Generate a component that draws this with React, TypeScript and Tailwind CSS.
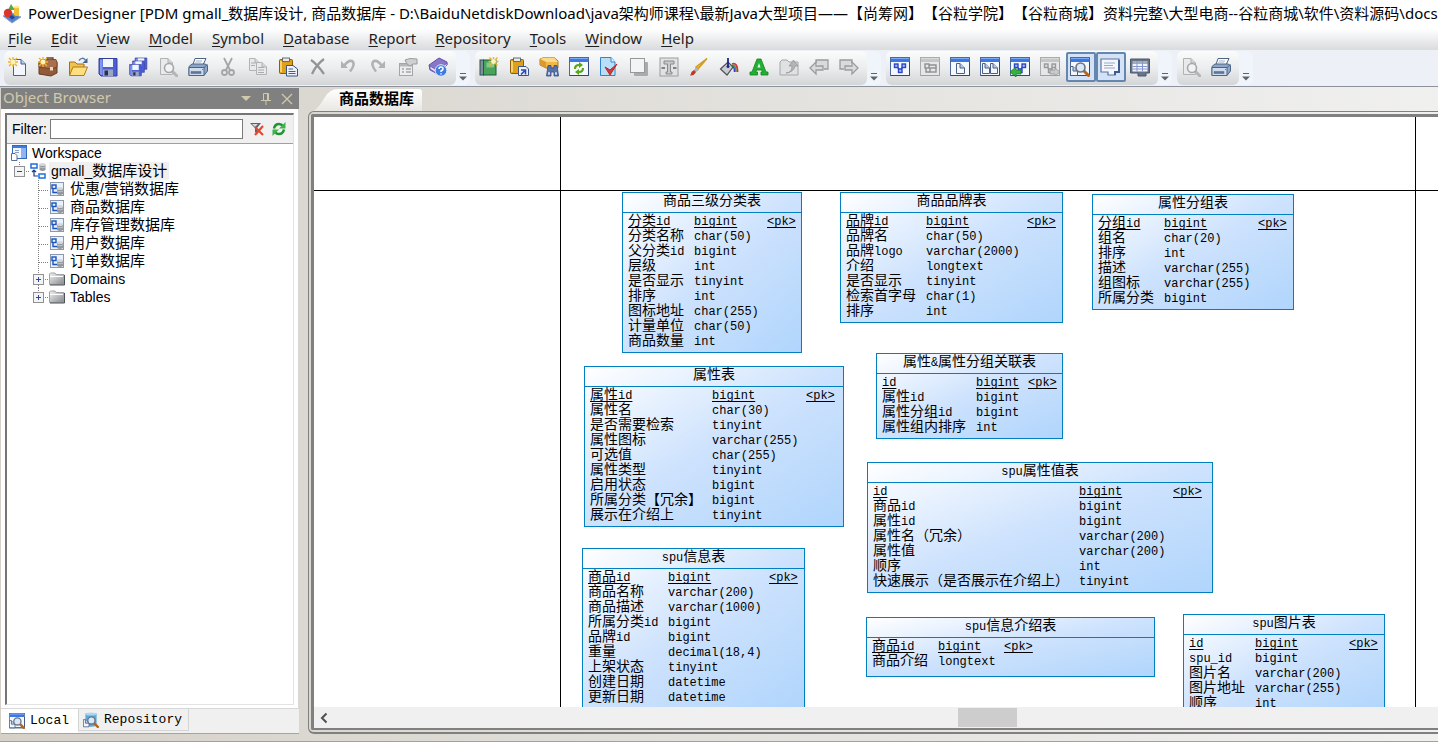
import React, { useState } from 'react';

interface Column {
  name: string;
  type: string;
}

interface Entity {
  title: string;
  x: number;
  y: number;
  width: number;
  minHeight?: number;
  nameWidth: number;
  typeWidth: number;
  columns: Column[];
}

const cols = (text: string): Column[] =>
  text.split(';').map(item => {
    const [name, type] = item.split(':');
    return { name, type };
  });

// positions are relative to the diagram canvas
const entities: Entity[] = [
  {
    title: '商品三级分类表', x: 308, y: 75, width: 180, nameWidth: 66, typeWidth: 73,
    columns: cols('分类id:bigint;分类名称:char(50);父分类id:bigint;层级:int;是否显示:tinyint;排序:int;图标地址:char(255);计量单位:char(50);商品数量:int')
  },
  {
    title: '商品品牌表', x: 526, y: 75, width: 223, nameWidth: 80, typeWidth: 101,
    columns: cols('品牌id:bigint;品牌名:char(50);品牌logo:varchar(2000);介绍:longtext;是否显示:tinyint;检索首字母:char(1);排序:int')
  },
  {
    title: '属性分组表', x: 778, y: 77, width: 202, nameWidth: 66, typeWidth: 94,
    columns: cols('分组id:bigint;组名:char(20);排序:int;描述:varchar(255);组图标:varchar(255);所属分类:bigint')
  },
  {
    title: '属性&属性分组关联表', x: 562, y: 236, width: 187, nameWidth: 94, typeWidth: 52,
    columns: cols('id:bigint;属性id:bigint;属性分组id:bigint;属性组内排序:int')
  },
  {
    title: '属性表', x: 270, y: 249, width: 260, nameWidth: 122, typeWidth: 94,
    columns: cols('属性id:bigint;属性名:char(30);是否需要检索:tinyint;属性图标:varchar(255);可选值:char(255);属性类型:tinyint;启用状态:bigint;所属分类【冗余】:bigint;展示在介绍上:tinyint')
  },
  {
    title: 'spu信息表', x: 268, y: 431, width: 223, nameWidth: 80, typeWidth: 101,
    columns: cols('商品id:bigint;商品名称:varchar(200);商品描述:varchar(1000);所属分类id:bigint;品牌id:bigint;重量:decimal(18,4);上架状态:tinyint;创建日期:datetime;更新日期:datetime')
  },
  {
    title: 'spu属性值表', x: 553, y: 345, width: 346, nameWidth: 206, typeWidth: 94,
    columns: cols('id:bigint;商品id:bigint;属性id:bigint;属性名（冗余）:varchar(200);属性值:varchar(200);顺序:int;快速展示（是否展示在介绍上）:tinyint')
  },
  {
    title: 'spu信息介绍表', x: 552, y: 500, width: 289, minHeight: 60, nameWidth: 66, typeWidth: 66,
    columns: cols('商品id:bigint;商品介绍:longtext')
  },
  {
    title: 'spu图片表', x: 869, y: 497, width: 202, nameWidth: 66, typeWidth: 94,
    columns: cols('id:bigint;spu_id:bigint;图片名:varchar(200);图片地址:varchar(255);顺序:int')
  }
];

const CJK = /([\u3000-\u9fff\uff00-\uffef]+)/;

// Chinese runs are set larger than the Latin text around them
const Mixed: React.FC<{ text: string; cjk: string }> = ({ text, cjk }) => (
  <>
    {text.split(CJK).map((part, i) => (i % 2 ? <span key={i} className={cjk}>{part}</span> : part))}
  </>
);

/* ---------- icon parts ---------- */

const Spark = ({ x = 5, y = 5 }) => (
  <g transform={`translate(${x} ${y})`}>
    <path d="M0-5V5M-5 0H5M-4-4L4 4M4-4L-4 4" stroke="#eeb22d" strokeWidth="1.4" />
    <circle r="2.4" fill="#fff3b0" />
  </g>
);

const Page = ({ x = 5, y = 2, w = 13, h = 17, gray = false }) => (
  <g transform={`translate(${x} ${y})`}>
    <path d={`M.5 .5H${w - 5}L${w - 0.5} 5V${h - 0.5}H.5Z`} fill={gray ? '#e9eaeb' : '#f3f7fd'} stroke={gray ? '#b0b2b4' : '#4a6184'} />
    <path d={`M${w - 5} .5V5H${w - 0.5}`} fill={gray ? '#d4d5d6' : '#b9cbe6'} stroke={gray ? '#b0b2b4' : '#4a6184'} />
  </g>
);

const Frame = ({ gray = false }) => (
  <g>
    <rect x=".5" y=".5" width="19" height="18" fill={gray ? '#e6e7e8' : '#f4f8ff'} stroke={gray ? '#a9abad' : '#4e689c'} />
    <rect x="1" y="1" width="18" height="4" fill={gray ? '#c4c6c8' : '#3f77e0'} />
    <rect x="1" y="1" width="18" height="1" fill={gray ? '#d8dadb' : '#7eabf5'} />
    <path d="M19.500 5V18.500H1" stroke={gray ? '#9d9fa1' : '#34496f'} />
  </g>
);

const Lens = ({ x = 9, y = 10, gray = false }) => (
  <g>
    <path d={`M${x + 3} ${y + 3}L${x + 8} ${y + 8}`} stroke={gray ? '#b3b5b7' : '#b5651d'} strokeWidth="3" strokeLinecap="round" />
    <circle cx={x} cy={y} r="4.5" fill={gray ? '#f2f3f3' : '#d8e9fa'} stroke={gray ? '#a5a7a9' : '#6a7280'} strokeWidth="1.6" />
  </g>
);

const Nodes = ({ gray = false }) => (
  <g fill={gray ? '#dcdddd' : '#a9b8fb'} stroke={gray ? '#98999b' : '#2c46c8'} strokeWidth="1.4">
    <path d="M7 10L10 13L14 9" fill="none" />
    <rect x="4.500" y="7" width="3.500" height="3.500" />
    <rect x="12" y="7" width="3.500" height="3.500" />
    <rect x="8.500" y="12" width="3.500" height="3.500" />
  </g>
);

const Cylinder = ({ x = 9, y = 7 }) => (
  <g transform={`translate(${x} ${y})`}>
    <path d="M0 1.500V7Q3 9 6 7V1.500Z" fill="#92979c" />
    <ellipse cx="3" cy="1.500" rx="3" ry="1.500" fill="#d4d7da" />
    <path d="M0 4Q3 5.500 6 4" fill="none" stroke="#d4d7da" strokeWidth=".7" />
  </g>
);

const Printer = () => (
  <g stroke="#4c6486" strokeLinejoin="round">
    <path d="M7 1.500L18 1.500L14.500 9H4.500Z" fill="#fbfcfe" />
    <path d="M1 9.500L4 7H17L19.500 8.500V14L16 18.500H1Z" fill="#8ea6c8" />
    <path d="M1 10.500H16V18.500H1Z" fill="#cfdcee" />
    <path d="M16 10.500L19.500 7.500" fill="none" />
    <path d="M3 14.500H13V16.500H3Z" fill="#5e7699" strokeWidth=".5" />
    <path d="M8 4H14M7 6H13" stroke="#a5b2c5" />
    <path d="M14 12.500H15" stroke="#3fae3f" />
  </g>
);

const Floppy = ({ s = 1, x = 0, y = 0 }) => (
  <g transform={`translate(${x} ${y}) scale(${s})`}>
    <path d="M1 1.500H19V19H3L1 17Z" fill="#4b5fd6" stroke="#343f9c" />
    <path d="M2 2.500H4.500V18H3L2 17Z" fill="#8496ee" />
    <rect x="5" y="2" width="10" height="8" fill="#f1f5fd" />
    <rect x="5" y="12.500" width="10" height="6.500" fill="#9ca6bd" />
    <rect x="6.500" y="13.500" width="3.500" height="5" fill="#26305c" />
  </g>
);

const Book = () => (
  <g>
    <path d="M1 8L11 1L19 5V8L10 17L2 13Z" fill="#8a76c8" stroke="#6350a4" />
    <path d="M2 12V9L10 14L19 6V8L10 17Z" fill="#e2def3" stroke="#6b57ad" strokeWidth=".8" />
    <circle cx="13" cy="13.500" r="5.800" fill="#3e7be0" stroke="#dce9fb" />
    <path d="M11 12Q11 10 13 10Q15.200 10 15 12Q14.700 13.200 13 14V15M13 16.200V17.500" fill="none" stroke="#fff" strokeWidth="1.500" />
  </g>
);

const Clipboard = ({ arrow = false }) => (
  <g>
    <rect x="1.500" y="2.500" width="13" height="14" rx="1" fill="#dfa11c" stroke="#8c5c10" />
    <path d="M3 4V15" stroke="#f9d976" strokeWidth="1.800" />
    <rect x="4.500" y="1" width="7" height="3.500" fill="#e9eaec" stroke="#5c6168" strokeWidth=".9" />
    <path d={arrow ? 'M9.500 9.500H17L19.500 12V18.500H9.500Z' : 'M8.500 8.500H15L19.500 12V19H8.500Z'} fill="#eef3fb" stroke="#3b5480" />
    {arrow ? <path d="M12 17.500L15.500 14M12 13H16.500V17.500" stroke="#2946b4" strokeWidth="1.600" /> : <path d="M10.500 12H15M10.500 14.500H17.500M10.500 16.500H17.500" stroke="#45608f" />}
  </g>
);

const Refresh = () => (
  <g fill="none" stroke="#1f9433" strokeWidth="2.500">
    <path d="M3 7.500Q4 3 8 3Q10.500 3 12 5" />
    <path d="M13 8.500Q12 13 8 13Q5.500 13 4 11" />
    <path d="M14.500 1V7.500H8Z" fill="#39b54a" stroke="none" />
    <path d="M1.500 15V8.500H8Z" fill="#39b54a" stroke="none" />
  </g>
);

const glyphs: Record<string, React.ReactNode> = {
  'New Model': <g><Page /><Spark /></g>,
  'New Project': (
    <g>
      <path d="M1 5H19V16L13 19L1 17Z" fill="#93593a" stroke="#6b3d22" />
      <path d="M1 5L4 2.500H18L19 5V10L13 12L1 10Z" fill="#a96f4c" stroke="#6b3d22" strokeWidth=".8" />
      <path d="M9 3V1H15V3" fill="none" stroke="#6b4025" strokeWidth="1.300" />
      <rect x="12" y="10" width="3" height="3.500" fill="#e8d7b8" />
      <Spark />
    </g>
  ),
  Open: (
    <g>
      <path d="M1.500 18V5H7L9 7H16V18Z" fill="#f0c24f" stroke="#a3701a" />
      <path d="M1.500 18.500L5 10H19.500L16 18.500Z" fill="#ffdf80" stroke="#b07b1c" />
      <path d="M11 3.500Q14 -.5 17.500 3" fill="none" stroke="#5878a8" strokeWidth="1.500" />
      <path d="M19.500 1V6H14.500Z" fill="#46648f" />
    </g>
  ),
  Save: <Floppy />,
  'Save All': <g><Floppy s={0.65} x={6.5} y={0} /><Floppy s={0.65} x={4} y={3} /><Floppy s={0.65} x={1} y={6.5} /></g>,
  'Print Preview': <g><Page x={2} y={1} gray /><Lens x={11} y={11} gray /></g>,
  Print: <Printer />,
  Cut: (
    <g fill="none" stroke="#a4a6a8" strokeWidth="1.800">
      <path d="M6 1L12 13M14 1L8 13" />
      <circle cx="6.500" cy="15.500" r="2.500" />
      <circle cx="13.500" cy="15.500" r="2.500" />
    </g>
  ),
  Copy: (
    <g>
      <Page x={1} y={1} w={11} h={13} gray />
      <Page x={8} y={5} w={11} h={13} gray />
      <path d="M3 6H7M3 8.500H7M10 10.500H16M10 13H16M10 15.500H16" stroke="#a9abad" />
    </g>
  ),
  Paste: <Clipboard />,
  Delete: <path d="M3 3Q9 7 16 17M16 2Q8 8 4 17" fill="none" stroke="#929496" strokeWidth="2.200" />,
  Undo: <g><path d="M6 9Q10 3 14 4Q18 7 12 14.500" fill="none" stroke="#b0b2b4" strokeWidth="2.600" /><path d="M3 4V11H10Z" fill="#b0b2b4" /></g>,
  Redo: <g><path d="M14 9Q10 3 6 4Q2 7 8 14.500" fill="none" stroke="#b0b2b4" strokeWidth="2.600" /><path d="M17 4V11H10Z" fill="#b0b2b4" /></g>,
  Properties: (
    <g>
      <rect x="1.500" y="6.500" width="13" height="12" fill="#eeeeef" stroke="#a3a5a7" />
      <rect x="2" y="7" width="12" height="2.500" fill="#b5b7b9" />
      <path d="M4 12H6M8 12H13M4 15H6M8 15H13" stroke="#a3a5a7" strokeWidth="1.300" />
      <path d="M7 3L12 1.500L19 2V7H15L12 9L9 7Z" fill="#cfd0d1" stroke="#999b9d" />
    </g>
  ),
  Help: <Book />,
  'New Diagram': (
    <g>
      <rect x="1" y="3" width="3.500" height="15" fill="#7c9296" stroke="#2e4e58" />
      <rect x="4.500" y="3" width="12.500" height="15" fill="#49a35a" stroke="#1f5c39" />
      <rect x="7.500" y="5.500" width="7" height="5" fill="#81c98b" />
      <Spark x={14.5} y={4.5} />
    </g>
  ),
  'Paste as Shortcut': <Clipboard arrow />,
  'Find Objects': (
    <g>
      <path d="M1 2L5 .5H15L19 4V11H7L1 8Z" fill="#f1b848" stroke="#a97a24" />
      <path d="M1 2L7 5H19L15 .5H5Z" fill="#fbd98a" />
      <path d="M1 2L7 5V11L1 8Z" fill="#dc9a2e" />
      <path d="M7.500 19L9 8.500H12V11H15V8.500H18L19.500 19H15V15H12V19Z" fill="#5873ab" stroke="#344b7d" strokeWidth=".8" />
      <path d="M9 16.500H11M16 16.500H18" stroke="#c9d8f2" strokeWidth="2.500" />
    </g>
  ),
  'Refresh View': (
    <g>
      <Frame />
      <path d="M6 12Q6 8 10 8M14 11Q14 15 10 15" fill="none" stroke="#5aa616" strokeWidth="2.200" />
      <path d="M10 5L14 8L10 11ZM10 12V18L6 15Z" fill="#5aa616" />
    </g>
  ),
  'Check Model': (
    <g>
      <path d="M1.500 .5H12L16 5V18.500H1.500Z" fill="#b9dff8" stroke="#2f86cc" />
      <path d="M12 .5V5H16" fill="#e9f5fd" stroke="#2f86cc" />
      <path d="M6 10L11 18L18 7L11 13Z" fill="#cf3a3d" stroke="#b8282c" />
    </g>
  ),
  Shadow: <g><rect x="5" y="5" width="14" height="14" rx="1" fill="#a9abad" /><rect x="1.500" y="1.500" width="14" height="14" fill="#f3f4f4" stroke="#96989a" /></g>,
  'Format Text': (
    <g>
      <rect x="1" y="1" width="18" height="18" fill="#e1e2e3" stroke="#9a9c9e" />
      <path d="M5 4H15V7H11.500V15H13V17H7V15H8.500V7H5Z" fill="#c9cacb" stroke="#808284" strokeWidth=".9" />
      <path d="M2.500 11H6M14 11H17.500" stroke="#808284" strokeWidth="2" />
    </g>
  ),
  'Line Style': (
    <g>
      <path d="M18 1.500L9 12L7 10Z" fill="#f2bb3a" stroke="#d19a25" strokeWidth="1.500" />
      <path d="M7 10L10 13L7 15L5 13Z" fill="#aeb4bb" />
      <path d="M5 13L7 15Q5 19 1 18.500Q2 17 2.500 15Z" fill="#c43524" />
    </g>
  ),
  'Fill Color': (
    <g>
      <path d="M13 7Q18.500 5 18.500 15" fill="none" stroke="#e03030" strokeWidth="1.800" />
      <path d="M12.500 8.500Q17 7 17 15" fill="none" stroke="#2ea144" strokeWidth="1.500" />
      <path d="M13 10Q15.500 9 15.500 15" fill="none" stroke="#2d3fe0" strokeWidth="1.500" />
      <path d="M1.500 12L9 5L14 10L8 18Z" fill="#c9ccd0" stroke="#4e5257" strokeWidth="1.200" />
      <path d="M9 1V9" stroke="#1c2a8a" strokeWidth="1.800" />
      <circle cx="9" cy="9.500" r="1.500" fill="#1c2a8a" />
    </g>
  ),
  'Font Color': (
    <g>
      <path d="M8 2H12L17 15H19V18H12V15H13.500L12.700 13H7.500L6.800 15H8.500V18H1V15H3Z" fill="#22b033" stroke="#13831f" strokeWidth=".8" />
      <path d="M8.500 10.500H11.500L10 6Z" fill="#eaf6eb" />
    </g>
  ),
  'Move Up': <g><path d="M1 18V5L3 3H8L10 5H19V18Z" fill="#e0e1e2" stroke="#a4a6a8" /><path d="M7 16Q13 16 13 9H10L14.500 3L19 9H16Q15 15 7 16Z" fill="#b2b4b6" stroke="#929496" strokeWidth=".7" /></g>,
  'Go Back': <g fill="#d9dadb" stroke="#9a9c9e" strokeWidth="1.300"><path d="M7 6V3H19V12H15" /><path d="M1 11L7 5V9H14V13H7V17Z" /></g>,
  'Go Forward': <g fill="#d9dadb" stroke="#9a9c9e" strokeWidth="1.300"><path d="M13 6V3H1V12H5" /><path d="M19 11L13 5V9H6V13H13V17Z" /></g>,
  'Physical Diagram': <g><Frame /><Nodes /></g>,
  'Hide Symbols': <g><Frame gray /><g fill="none" stroke="#8e9092" strokeWidth="1.400"><rect x="5" y="7" width="4" height="4" /><rect x="10" y="11" width="6" height="4" /><path d="M9 8H16V11M6 11V15H10" /></g></g>,
  'One Page': <g><Frame /><Page x={6} y={6} w={9} h={11} /></g>,
  'Two Pages': <g><Frame /><Page x={2} y={6} w={8} h={11} /><Page x={10} y={6} w={8} h={11} /></g>,
  'Previous Diagram': <g><Frame /><Nodes /><path d="M0 15L6 10V13H11V17H6V20Z" fill="#34b340" stroke="#147a22" strokeWidth=".8" /></g>,
  'Next Diagram': <g><Frame gray /><Nodes gray /><path d="M20 15L15 11V13H10V17H15V19Z" fill="#c9cacb" stroke="#949698" strokeWidth=".8" /></g>,
  Browser: <g><Frame /><Page x={0} y={9} w={8} h={10} /><Lens x={10.5} y={10.5} /></g>,
  Output: <g><path d="M1 2H19V15H15V18H8V15H1Z" fill="#f3f7fd" stroke="#5c7499" strokeWidth="1.200" /><path d="M4 6H15M4 8.500H13M4 11H15" stroke="#97a8c2" /><path d="M19 3V15H15V18" fill="none" stroke="#3e5c8e" strokeWidth="2" /></g>,
  'Result List': <g><path d="M.5 2H19.500V16H16V19H8V16H.5Z" fill="#66758a" stroke="#4a586c" /><rect x="2.500" y="4" width="15" height="3" fill="#a6adb7" /><path d="M2.500 7H17.500V14.500H2.500Z" fill="#f3f4fb" /><path d="M2.500 9.500H17.500M2.500 12H17.500M7 4V14.500M12.500 4V14.500" stroke="#8496d0" /></g>,
  Preview: <g><Page x={2} y={1} gray /><Lens x={11} y={11} gray /></g>,
  'Print Page': <Printer />
};

const Icon: React.FC<{ name: string }> = ({ name }) => (
  <svg width="20" height="20" viewBox="0 0 20 20" fill="none" aria-hidden="true">{glyphs[name]}</svg>
);

const toolbars: string[][] = [
  ['New Model', 'New Project', 'Open', 'Save', 'Save All', 'Print Preview', 'Print', 'Cut', 'Copy', 'Paste', 'Delete', 'Undo', 'Redo', 'Properties', 'Help'],
  ['New Diagram', 'Paste as Shortcut', 'Find Objects', 'Refresh View', 'Check Model', 'Shadow', 'Format Text', 'Line Style', 'Fill Color', 'Font Color', 'Move Up', 'Go Back', 'Go Forward'],
  ['Physical Diagram', 'Hide Symbols', 'One Page', 'Two Pages', 'Previous Diagram', 'Next Diagram', 'Browser', 'Output', 'Result List'],
  ['Preview', 'Print Page']
];

const menus = ['File', 'Edit', 'View', 'Model', 'Symbol', 'Database', 'Report', 'Repository', 'Tools', 'Window', 'Help'];

const diagrams = ['优惠/营销数据库', '商品数据库', '库存管理数据库', '用户数据库', '订单数据库'];

const Toolbar: React.FC<{ items: string[] }> = ({ items }) => {
  const [pressed, setPressed] = useState<string[]>(['Browser', 'Output']);

  const toggle = (name: string) => {
    if (name !== 'Browser' && name !== 'Output') return;
    setPressed(prev => (prev.includes(name) ? prev.filter(n => n !== name) : [...prev, name]));
  };

  return (
    <div className="mr-[5px] flex shrink-0 rounded-md bg-[#f0f5fc]">
      <div className="flex items-start rounded-md bg-linear-to-b from-[#fbfcfc] via-[#ebedee] to-[#d3d5d7] pt-px pr-[2px]">
        {items.map(name => (
          <button
            key={name}
            aria-label={name}
            onClick={() => toggle(name)}
            className={`flex h-[30px] w-[30px] items-center ${pressed.includes(name) ? 'rounded-xs border-2 border-[#6587ae] bg-[#d3e2f6] pl-[2px]' : 'border border-transparent pl-[3px]'}`}
          >
            <Icon name={name} />
          </button>
        ))}
      </div>
      <button aria-label="Toolbar options" className="flex w-[14px] items-end justify-center pb-[4px]">
        <svg width="8" height="8" viewBox="0 0 8 8"><path d="M1 .5H7" stroke="#606468" /><path d="M0 3.500H8L4 7.500Z" fill="#606468" /></svg>
      </button>
    </div>
  );
};

const DiagramIcon = () => (
  <svg width="16" height="16" viewBox="0 0 16 16" fill="none" aria-hidden="true">
    <rect x="1.500" y="1.500" width="13" height="13" fill="#eaf1fb" stroke="#8a99b0" />
    <rect x="3" y="4" width="4" height="3.500" stroke="#1b54c0" strokeWidth="1.400" />
    <path d="M4 8V11.500H8" stroke="#1b54c0" strokeWidth="1.400" />
    <Cylinder x={8} y={6} />
  </svg>
);

const FolderIcon = () => (
  <svg width="16" height="16" viewBox="0 0 16 16" fill="none" aria-hidden="true">
    <defs>
      <linearGradient id="folder" x1="0" y1="0" x2="1" y2="1">
        <stop offset="0" stopColor="#f2f3f3" />
        <stop offset="1" stopColor="#85888c" />
      </linearGradient>
    </defs>
    <path d="M.5 13.500V3L1.500 2H6L7 3.500H15V13.500Z" fill="url(#folder)" stroke="#a0a3a6" />
    <path d="M1 5.500H14" stroke="#fff" />
    <path d="M1 14H15.500V4" stroke="#4d5054" />
  </svg>
);

const Expander: React.FC<{ open?: boolean; label: string }> = ({ open, label }) => (
  <button aria-label={label}>
    <svg width="16" height="18" viewBox="0 0 16 18" fill="none">
      <path d="M5.500 0V4M12 9.500H16" stroke="#808080" strokeDasharray="1 1" />
      {!open && label === 'Domains' && <path d="M5.500 15V18" stroke="#808080" strokeDasharray="1 1" />}
      <rect x=".5" y="4.500" width="10" height="10" fill="#f4f4f4" stroke="#919191" />
      <path d="M3 9.500H8" stroke="#2a4b9b" />
      {!open && <path d="M5.500 7V12" stroke="#2a4b9b" />}
    </svg>
  </button>
);

const Branch = () => (
  <svg width="16" height="18" viewBox="0 0 16 18" fill="none" aria-hidden="true">
    <path d="M5.500 0V18M6 10.500H16" stroke="#808080" strokeDasharray="1 1" />
  </svg>
);

const LensIcon: React.FC<{ repository?: boolean }> = ({ repository }) => (
  <svg width="16" height="16" viewBox="0 0 20 20" fill="none" aria-hidden="true">
    {repository ? (
      <g>
        <path d="M3 2V17Q10 20 17 17V2Z" fill="#58a9dc" />
        <ellipse cx="10" cy="2.500" rx="7" ry="2" fill="#a6d7f4" />
      </g>
    ) : (
      <Frame />
    )}
    <Page x={0} y={9} w={8} h={10} />
    <Lens x={10.5} y={10.5} />
  </svg>
);

const ObjectBrowser: React.FC = () => {
  const [filter, setFilter] = useState('');

  return (
    <aside className="mt-px ml-px flex w-[298px] shrink-0 flex-col border-b border-[#a5a5a0] bg-[#f0f0f0]">
      <header className="flex h-[21px] items-center bg-[#808080] pr-[6px] pl-[2px] text-[#d0caad]">
        <h2 className="grow pb-[2px] font-['Noto_Sans',sans-serif] text-[15px] leading-[19px]">Object Browser</h2>
        <button aria-label="Window position" className="w-[20px]">
          <svg width="10" height="6" viewBox="0 0 10 6"><path d="M0 0H10L5 5Z" fill="currentColor" /></svg>
        </button>
        <button aria-label="Auto hide" className="w-[20px]">
          <svg width="10" height="14" viewBox="0 0 10 14" fill="none" stroke="currentColor"><path d="M2.500 8V1.500H7.500V8M6.500 2V8M0 8.500H10M5 9V13" /></svg>
        </button>
        <button aria-label="Close">
          <svg width="12" height="12" viewBox="0 0 12 12" stroke="currentColor" strokeWidth="1.300"><path d="M1 1L11 11M11 1L1 11" /></svg>
        </button>
      </header>
      <div className="flex min-h-0 grow flex-col border-r border-b border-[#d8d8d8] bg-white px-[4px] pt-[4px] pb-[3px]">
        <div className="flex grow flex-col border border-t-2 border-l-2 border-[#e3e3e3] border-t-[#757575] border-l-[#757575]">
          <div className="flex h-[29px] items-center border-b border-[#a0a0a0] bg-[#f0f0f0] pl-[5px]">
            <label htmlFor="filter" className="w-[38px] text-[14px]">Filter:</label>
            <input
              id="filter"
              value={filter}
              onChange={e => setFilter(e.target.value)}
              className="h-[20px] w-[193px] border border-[#7a7a7a] bg-white px-1 outline-none"
            />
            <button aria-label="Clear filter" className="ml-[7px]" onClick={() => setFilter('')}>
              <svg width="14" height="14" viewBox="0 0 14 14">
                <path d="M0 1H11L7 6V12L5 10V6Z" fill="#5d6268" />
                <path d="M2 2H8L5 5Z" fill="#d7dade" />
                <path d="M5 5L13 13M13 4L5 13" stroke="#e5482b" strokeWidth="2.200" />
              </svg>
            </button>
            <button aria-label="Refresh" className="ml-[7px]">
              <svg width="16" height="16" viewBox="0 0 16 16"><Refresh /></svg>
            </button>
          </div>
          <ul className="text-[14px] leading-[18px]">
            <li>
              <div className="flex h-[18px] items-center gap-[5px] pl-[4px]">
                <svg width="16" height="16" viewBox="0 0 16 16" fill="none">
                  <rect x="1.500" y=".5" width="14" height="13" fill="#f2f7ff" stroke="#3568b8" />
                  <path d="M2 1H15V3H2Z" fill="#3f7be0" />
                  <path d="M10 3H15V13H10Z" fill="#8bb6f3" />
                  <path d="M4 5.500H8M4 7.500H8" stroke="#8ba0c0" />
                  <path d="M.5 8.500H4L6 10.500V15.500H.5Z" fill="#fff" stroke="#5a6f92" />
                </svg>
                Workspace
              </div>
              <ul>
                <li>
                  <div className="flex h-[18px] items-center pl-[7px]">
                    <Expander open label="gmall" />
                    <svg width="16" height="16" viewBox="0 0 16 16" fill="none">
                      <rect x="1" y="1" width="6" height="4" fill="#fff" stroke="#1c6fe0" strokeWidth="1.500" />
                      <rect x="9" y="11" width="6" height="4" fill="#fff" stroke="#1c6fe0" strokeWidth="1.500" />
                      <path d="M4 7V13H8M2 9L4 7L6 9" stroke="#1c3a8a" strokeWidth="1.200" />
                      <Cylinder x={9.5} y={0} />
                    </svg>
                    <span className="ml-[3px] bg-[#f0f0f0] px-[2px]"><Mixed text="gmall_数据库设计" cjk="text-[15px] leading-none" /></span>
                  </div>
                  <ul>
                    {diagrams.map(name => (
                      <li key={name} className="flex h-[18px] items-center pl-[26px]">
                        <Branch />
                        <DiagramIcon />
                        <span className="ml-[5px]"><Mixed text={name} cjk="text-[15px] leading-none" /></span>
                      </li>
                    ))}
                    {['Domains', 'Tables'].map(name => (
                      <li key={name} className="flex h-[18px] items-center pl-[26px]">
                        <Expander label={name} />
                        <FolderIcon />
                        <span className="ml-[5px]">{name}</span>
                      </li>
                    ))}
                  </ul>
                </li>
              </ul>
            </li>
          </ul>
        </div>
      </div>
      <div className="flex h-[24px] shrink-0 items-start font-['Liberation_Mono',monospace] text-[13px]">
        <button className="flex h-[24px] w-[77px] items-center gap-[5px] bg-white pl-[8px]"><LensIcon />Local</button>
        <button className="flex h-[22px] w-[111px] items-center gap-[5px] border border-t-0 border-[#d5d5d5] pl-[4px]"><LensIcon repository />Repository</button>
      </div>
    </aside>
  );
};

const EntityTable: React.FC<{ entity: Entity }> = ({ entity }) => {
  const { title, x, y, width, minHeight, nameWidth, typeWidth, columns } = entity;
  return (
    <div
      className="absolute border border-[#0080c0] bg-linear-to-br from-white via-[#cde2fd] to-[#b0d5fc]"
      style={{ left: x, top: y, width, minHeight }}
    >
      <table className="w-full table-fixed border-separate border-spacing-0 text-left">
        <colgroup>
          <col style={{ width: nameWidth + 5 }} />
          <col style={{ width: typeWidth }} />
          <col />
        </colgroup>
        <thead>
          <tr>
            <th colSpan={3} className="h-[20px] border-b border-[#0080c0] p-0 text-center leading-[19px] font-normal">
              <Mixed text={title} cjk="text-[14px] leading-[8px]" />
            </th>
          </tr>
        </thead>
        <tbody className="before:block before:h-[2px] after:block after:h-[2px]">
          {columns.map((column, i) => (
            <tr key={column.name} className={i === 0 ? 'underline underline-offset-2' : ''}>
              <td className="h-[15px] p-0 pl-[5px] leading-[15px] whitespace-nowrap"><Mixed text={column.name} cjk="text-[14px] leading-[8px]" /></td>
              <td className="h-[15px] p-0 leading-[15px] whitespace-nowrap">{column.type}</td>
              <td className="h-[15px] p-0 leading-[15px]">{i === 0 ? '<pk>' : ''}</td>
            </tr>
          ))}
        </tbody>
      </table>
    </div>
  );
};

const DiagramWindow: React.FC = () => (
  <main className="ml-[9px] flex min-w-0 grow flex-col">
    <div className="flex h-[24px] shrink-0 items-end">
      <div className="relative flex h-[23px] w-[114px] items-center justify-end pr-[8px]">
        <svg className="absolute inset-0" width="114" height="23" viewBox="0 0 114 23" aria-hidden="true">
          <defs>
            <linearGradient id="tab" x1="0" y1="0" x2="0" y2="1">
              <stop offset="0" stopColor="#fff" />
              <stop offset="1" stopColor="#e9e7e3" />
            </linearGradient>
          </defs>
          <path d="M6 23Q12 18 17 9Q22 1 30 1H111Q114 1 114 4V23Z" fill="url(#tab)" />
        </svg>
        <button className="relative pb-[2px] text-[15px] leading-[21px] font-bold">商品数据库</button>
      </div>
    </div>
    <div className="flex min-h-0 grow flex-col rounded-l-md border border-r-0 border-b-2 border-[#808080] p-[2px] pr-0">
      <div className="flex min-h-0 grow flex-col rounded-l-xs border-3 border-r-0 border-b-2 border-[#808080] bg-white">
        <div className="relative min-h-0 grow overflow-hidden font-['Liberation_Mono','Noto_Sans_CJK_SC',monospace] text-[12px]">
          {/* page boundaries */}
          <div className="absolute inset-y-0 left-[246px] w-px bg-black" />
          <div className="absolute inset-y-0 left-[1101px] w-px bg-black" />
          <div className="absolute inset-x-0 top-[73px] h-px bg-black" />
          {entities.map(entity => <EntityTable key={entity.title} entity={entity} />)}
        </div>
        <div className="flex h-[21px] shrink-0 items-center bg-[#f0f0f0]">
          <button aria-label="Scroll left" className="w-[20px] pl-[6px]">
            <svg width="8" height="12" viewBox="0 0 8 12" fill="none" stroke="#505050" strokeWidth="2"><path d="M6.500 1.500L2 6L6.500 10.500" /></svg>
          </button>
          <div className="flex grow">
            <div className="w-[56.5%]" />
            <div className="h-[19px] w-[59px] bg-[#cdcdcd]" />
          </div>
        </div>
      </div>
    </div>
  </main>
);

export default function App() {
  return (
    <div className="flex h-screen flex-col overflow-hidden bg-linear-to-r from-[#d5d1c9] to-[#f0f0ef] font-['Liberation_Sans','Noto_Sans_CJK_SC',sans-serif] text-black">
      <header className="flex h-[29px] shrink-0 items-center gap-[6px] overflow-hidden bg-white pb-[2px] pl-[2px] font-['Noto_Sans','Noto_Sans_CJK_SC',sans-serif]">
        <svg className="shrink-0" width="20" height="20" viewBox="0 0 20 20" aria-hidden="true">
          <path d="M1 12L10 9L19 13L10 19Z" fill="#5b82c4" stroke="#8ea6cc" />
          <path d="M9 0L13 6H6Z" fill="#57a94c" />
          <circle cx="6" cy="9" r="4.200" fill="#e0322c" />
          <path d="M12 3H17V11Q14.500 13 12 11Z" fill="#f2bf30" />
          <ellipse cx="14.500" cy="3" rx="2.500" ry="1.200" fill="#ffe68c" />
          <path d="M7 13L10 11L13 13.500L10 15.500Z" fill="#20489a" />
        </svg>
        <h1 className="text-[15px] leading-[27px] whitespace-nowrap [text-spacing-trim:space-all]">
          PowerDesigner [PDM gmall_数据库设计, 商品数据库 - D:\BaiduNetdiskDownload\java架构师课程\最新Java大型项目——【尚筹网】【谷粒学院】【谷粒商城】资料完整\大型电商--谷粒商城\软件\资料源码\docs
        </h1>
      </header>
      <nav className="flex h-[21px] shrink-0 items-center gap-[19px] bg-linear-to-b from-white to-[#d9dbdc] pb-[2px] pl-[8px] font-['Noto_Sans',sans-serif] text-[15px] leading-[19px] text-[#1e1e1e]">
        {menus.map(menu => (
          <button key={menu} className="first-letter:underline first-letter:underline-offset-2">{menu}</button>
        ))}
      </nav>
      <div className="flex h-[37px] shrink-0 border-b border-[#8c929b] bg-[#edf0f6] py-px pl-[4px]">
        {toolbars.map((items, i) => <Toolbar key={i} items={items} />)}
      </div>
      <div className="flex min-h-0 grow">
        <ObjectBrowser />
        <DiagramWindow />
      </div>
      <footer className="h-[8px] shrink-0 border-b border-[#a3a19c]" />
    </div>
  );
}
